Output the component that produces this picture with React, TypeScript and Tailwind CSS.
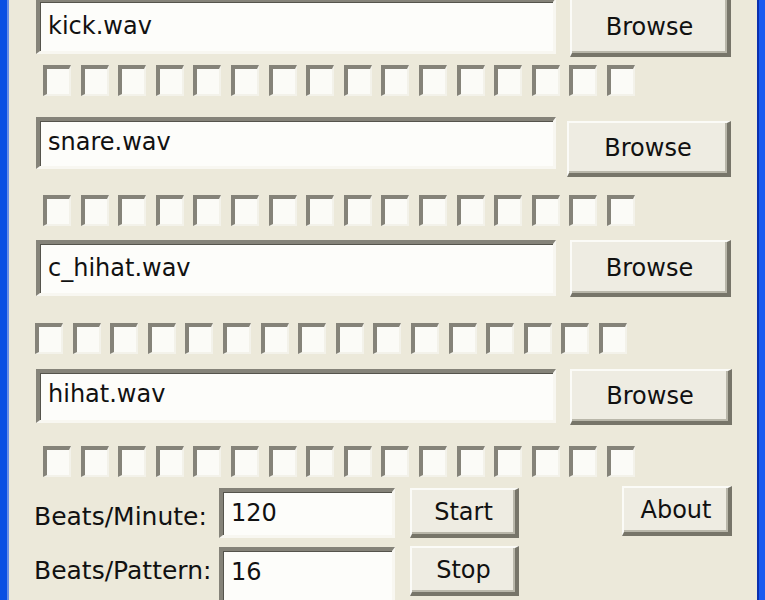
import { useState } from 'react';

const tracks = [
  { file: 'kick.wav' },
  { file: 'snare.wav' },
  { file: 'c_hihat.wav' },
  { file: 'hihat.wav' },
];

const font = { fontFamily: '"DejaVu Sans", Verdana, sans-serif' };

function Sunken({ className = '', children }: { className?: string; children?: React.ReactNode }) {
  return (
    <div
      className={`bg-[#fdfdfa] border-t-[4px] border-l-[4px] border-b-[3px] border-r-[3px] border-t-[#858379] border-l-[#858379] border-b-[#f8f7f1] border-r-[#f8f7f1] shadow-[inset_1px_1px_0_#55544c] ${className}`}
    >
      {children}
    </div>
  );
}

function Button({ label, className = '' }: { label: string; className?: string }) {
  return (
    <button
      className={`flex items-center justify-center bg-[#eeece2] text-[24px] text-[#111] border-t-[2px] border-l-[2px] border-b-[4px] border-r-[4px] border-t-[#fbfbf7] border-l-[#fbfbf7] border-b-[#777569] border-r-[#777569] shadow-[inset_-2px_-2px_0_#b9b7aa] ${className}`}
    >
      {label}
    </button>
  );
}

function StepRow({ steps, onToggle, className = '' }: { steps: boolean[]; onToggle: (i: number) => void; className?: string }) {
  return (
    <div className={`flex gap-[9.6px] ${className}`}>
      {steps.map((on, i) => (
        <button
          key={i}
          onClick={() => onToggle(i)}
          className="w-[28px] h-[31px] bg-[#fbfbf7] border-t-[4px] border-l-[4px] border-b-[2px] border-r-[2px] border-t-[#858379] border-l-[#858379] border-b-[#f3f2ea] border-r-[#f3f2ea] flex items-center justify-center text-[18px] leading-none"
        >
          {on ? '✓' : ''}
        </button>
      ))}
    </div>
  );
}

export default function App() {
  const [grid, setGrid] = useState<boolean[][]>(tracks.map(() => Array(16).fill(false)));

  const toggle = (t: number, i: number) =>
    setGrid((g) => g.map((row, ti) => (ti === t ? row.map((v, si) => (si === i ? !v : v)) : row)));

  return (
    <div className="w-[765px] h-[600px] overflow-hidden flex bg-[#ece9da]" style={font}>
      {/* window frame, left */}
      <div className="w-[7px] bg-[#0b4fe3] shrink-0" />
      <div className="w-[2px] bg-[#6c8fe6] shrink-0" />

      <div className="flex-1 flex flex-col pl-[27px] text-[#111]">
        {/* kick */}
        <div className="flex items-start mt-[-2px]">
          <Sunken className="w-[520px] h-[56px] pl-[8px] pt-[9px] text-[24px] leading-[30px]">{tracks[0].file}</Sunken>
          <Button label="Browse" className="ml-[14px] w-[161px] h-[59px]" />
        </div>
        <StepRow steps={grid[0]} onToggle={(i) => toggle(0, i)} className="mt-[8px] ml-[7px]" />

        {/* snare */}
        <div className="flex items-start mt-[21px]">
          <Sunken className="w-[520px] h-[52px] pl-[8px] pt-[6px] text-[24px] leading-[30px]">{tracks[1].file}</Sunken>
          <Button label="Browse" className="ml-[11px] mt-[4px] w-[164px] h-[56px]" />
        </div>
        <StepRow steps={grid[1]} onToggle={(i) => toggle(1, i)} className="mt-[18px] ml-[7px]" />

        {/* closed hihat */}
        <div className="flex items-start mt-[14px]">
          <Sunken className="w-[520px] h-[56px] pl-[8px] pt-[9px] text-[24px] leading-[30px]">{tracks[2].file}</Sunken>
          <Button label="Browse" className="ml-[14px] w-[161px] h-[57px]" />
        </div>
        <StepRow steps={grid[2]} onToggle={(i) => toggle(2, i)} className="mt-[26px] ml-[-1px]" />

        {/* open hihat */}
        <div className="flex items-start mt-[15px]">
          <Sunken className="w-[520px] h-[54px] pl-[8px] pt-[6px] text-[24px] leading-[30px]">{tracks[3].file}</Sunken>
          <Button label="Browse" className="ml-[14px] w-[162px] h-[56px]" />
        </div>
        <StepRow steps={grid[3]} onToggle={(i) => toggle(3, i)} className="mt-[21px] ml-[7px]" />

        {/* transport */}
        <div className="flex items-start mt-[9px] ml-[-2px]">
          <div className="w-[185px] pt-[16px] text-[25px] leading-[30px] whitespace-nowrap">Beats/Minute:</div>
          <Sunken className="mt-[2px] w-[176px] h-[50px] pl-[8px] pt-[6px] text-[24px] leading-[30px]">120</Sunken>
          <Button label="Start" className="ml-[15px] mt-[2px] w-[109px] h-[50px]" />
          <Button label="About" className="ml-[103px] w-[110px] h-[50px]" />
        </div>
        <div className="flex items-start mt-[8px] ml-[-2px]">
          <div className="w-[185px] pt-[10px] text-[25px] leading-[30px] whitespace-nowrap">Beats/Pattern:</div>
          <Sunken className="mt-[1px] w-[176px] h-[60px] pl-[8px] pt-[6px] text-[24px] leading-[30px]">16</Sunken>
          <Button label="Stop" className="ml-[15px] w-[109px] h-[50px]" />
        </div>
      </div>

      {/* window frame, right */}
      <div className="w-[2px] bg-[#0a2fae] shrink-0" />
      <div className="w-[6px] bg-[#1a5af0] shrink-0" />
    </div>
  );
}
